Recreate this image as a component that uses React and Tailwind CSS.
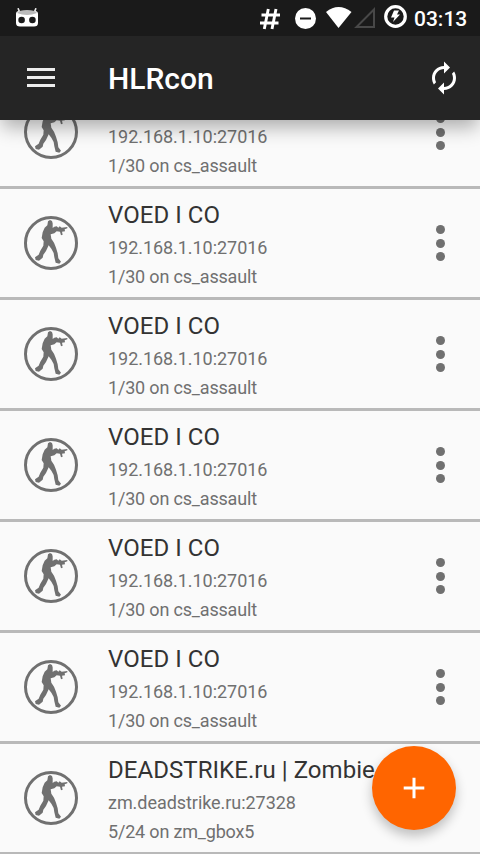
const servers = [
  { name: '', address: '192.168.1.10:27016', status: '1/30 on cs_assault' },
  ...Array.from({ length: 5 }, () => ({
    name: 'VOED I CO',
    address: '192.168.1.10:27016',
    status: '1/30 on cs_assault',
  })),
  {
    name: 'DEADSTRIKE.ru | Zombie',
    address: 'zm.deadstrike.ru:27328',
    status: '5/24 on zm_gbox5',
  },
];

function StatusBar() {
  return (
    <div className="flex h-9 items-center bg-[#1a1a1a] text-white">
      <svg className="ml-4 h-5 w-[22px]" viewBox="0 0 22 20">
        <path d="M2 .2 4 5M20 .2 18 5" stroke="#eee" strokeWidth="1.600" />
        <path d="M0 6Q0 3 3 3H19Q22 3 22 6V15Q22 18.500 18 18.500H4Q0 18.500 0 15Z" fill="#fff" />
        <path d="M1 5Q3 2 11 2T21 5Q16 7 11 7T1 5Z" fill="#bbb" />
        <circle cx="5.600" cy="12" r="3.300" fill="#1a1a1a" />
        <circle cx="16.400" cy="12" r="3.300" fill="#1a1a1a" />
      </svg>
      <svg className="ml-[222px] h-9 w-[116px]" viewBox="260 0 116 36">
        <path d="M268.300 9 264.300 29M276 9 272 29M261.500 15H280M260 23H278.500" stroke="#fff" strokeWidth="2.900" fill="none" />
        <circle cx="305.500" cy="18.500" r="10.500" fill="#fff" />
        <path d="M300 18.500H311" stroke="#1a1a1a" strokeWidth="2" />
        <path d="M326 12Q338.500 2 351.500 12L338.500 28Z" fill="#fff" />
        <path d="M374 9.500V27H356.500Z" fill="none" stroke="#484848" strokeWidth="2" />
      </svg>
      <svg className="ml-2 h-9 w-6" viewBox="384 0 24 36">
        <circle cx="395.500" cy="16.500" r="9.800" fill="none" stroke="#fff" strokeWidth="3.200" />
        <path d="M394 10.500H399L397 14.500H400L393 22 394.500 17.500H391Z" fill="#fff" />
      </svg>
      <span className="ml-1.5 pt-px text-[21px] leading-9 font-medium">03:13</span>
    </div>
  );
}

function Toolbar() {
  return (
    <div className="flex h-21 items-center bg-[#252525] text-white">
      <button className="mb-px ml-[27px] flex w-7 flex-col gap-[5px]" aria-label="Menu">
        <span className="h-[3px] w-full bg-[#ededed]" />
        <span className="h-[3px] w-full bg-[#ededed]" />
        <span className="h-[3px] w-full bg-[#ededed]" />
      </button>
      <h1 className="ml-[53px] flex-1 pt-px text-[30px] leading-none font-medium">HLRcon</h1>
      <button className="mr-[18px]" aria-label="Refresh">
        <svg className="size-9" viewBox="0 0 24 24" fill="#fff">
          <path d="M12 6v3l4-4-4-4v3c-4.420 0-8 3.580-8 8 0 1.570.46 3.030 1.240 4.260L6.700 14.800A5.870 5.870 0 0 1 6 12c0-3.310 2.690-6 6-6zm6.760 1.740L17.300 9.200c.44.840.7 1.790.7 2.800 0 3.310-2.690 6-6 6v-3l-4 4 4 4v-3c4.420 0 8-3.580 8-8 0-1.570-.46-3.030-1.240-4.260z" />
        </svg>
      </button>
    </div>
  );
}

function SoldierIcon() {
  return (
    <svg className="ml-6 size-[54px] shrink-0" viewBox="42 33 162 162">
      <circle cx="123" cy="114" r="76.500" fill="none" stroke="#707070" strokeWidth="9" />
      <path
        fill="#707070"
        d="M120 45 114 49 112 61 104 68 98 82 95 99 101 109 100 122 91 137 86 149 75 157 77 165 87 167 98 158 100 149 108 138 116 121 124 131 131 144 133 157 137 173 148 176 153 170 145 160 143 145 138 128 132 113 124 101 122 88 133 85 140 79 150 80 153 91 158 89 156 80 165 79 164 73 172 70 172 66 155 68 149 64 145 68 140 64 133 65 128 69 128 55 126 48Z"
      />
    </svg>
  );
}

function ServerRow({ server }) {
  return (
    <li className="flex h-[111px] shrink-0 items-center border-b-3 border-[#b9b9b9]">
      <SoldierIcon />
      <div className="ml-[30px] flex-1 pt-0.5 whitespace-nowrap">
        <div className="h-9 text-[24px] leading-9 tracking-[0.05px] text-[#333]">{server.name}</div>
        <div className="text-[18px] leading-[29px] tracking-[-0.05px] text-[#707070]">{server.address}</div>
        <div className="text-[18px] leading-[29px] tracking-[-0.18px] text-[#707070]">{server.status}</div>
      </div>
      <button className="mr-[35px] flex flex-col gap-[4.500px]" aria-label="More options">
        <span className="size-[9px] rounded-full bg-[#707070]" />
        <span className="size-[9px] rounded-full bg-[#707070]" />
        <span className="size-[9px] rounded-full bg-[#707070]" />
      </button>
    </li>
  );
}

export default function App() {
  return (
    <div className="relative flex h-[854px] w-[480px] flex-col overflow-hidden bg-[#fafafa] font-[Roboto,sans-serif]">
      <header className="z-10 shrink-0 shadow-[0_9px_18px_-2px_rgba(0,0,0,0.32)]">
        <StatusBar />
        <Toolbar />
      </header>
      <ul className="-mt-[42px] flex flex-col">
        {servers.map((server, i) => (
          <ServerRow key={i} server={server} />
        ))}
      </ul>
      <button
        className="absolute right-6 bottom-6 flex size-21 items-center justify-center rounded-full bg-[#ff6500] shadow-[0_6px_12px_rgba(0,0,0,0.24)]"
        aria-label="Add server"
      >
        <svg className="size-[22px]" viewBox="0 0 22 22">
          <path d="M11 .7V21.300M.7 11H21.300" stroke="#fff" strokeWidth="3" />
        </svg>
      </button>
    </div>
  );
}
